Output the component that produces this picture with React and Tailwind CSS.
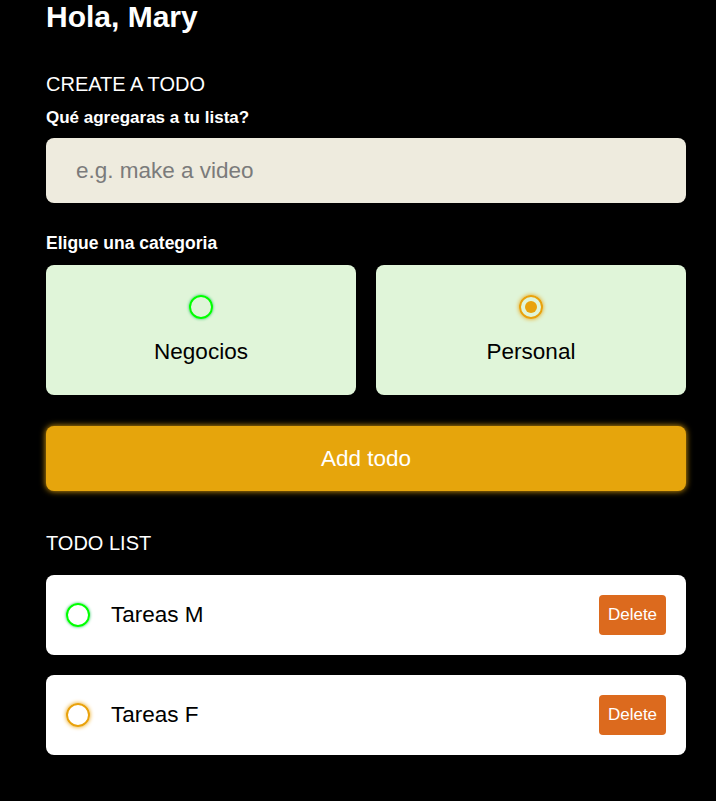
import React, { useState } from 'react';

const todos = [
  { id: 1, text: 'Tareas M', category: 'business' },
  { id: 2, text: 'Tareas F', category: 'personal' },
];

const Bubble = ({ category, checked }) => {
  const ring =
    category === 'business'
      ? 'border-[#00ff00] shadow-[0_0_3px_#22c55e]'
      : 'border-[#e9a20c] shadow-[0_0_4px_#e9a20c]';
  return (
    <span className={`w-6 h-6 rounded-full border-2 flex items-center justify-center shrink-0 ${ring}`}>
      {checked && <span className="w-3 h-3 rounded-full bg-[#e9a20c]" />}
    </span>
  );
};

const App = () => {
  const [category, setCategory] = useState('personal');

  return (
    <div className="min-h-[801px] bg-black text-white pl-[46px] pb-10" style={{ fontFamily: '"Liberation Sans", Arial, sans-serif' }}>
      <div className="w-[640px]">
        <h1 className="text-[30px] leading-[34px] font-bold">Hola, Mary</h1>

        <h2 className="mt-[39px] text-[20px] leading-[23px]">CREATE A TODO</h2>
        <h4 className="mt-[12px] text-[17px] leading-[19px] font-bold">Qué agregaras a tu lista?</h4>

        <input
          type="text"
          placeholder="e.g. make a video"
          className="mt-[11px] block w-full h-[65px] rounded-lg bg-[#eeebde] px-[30px] text-[22.5px] text-black placeholder:text-[#7b7b7b] outline-none shadow-[0_2px_6px_rgba(0,0,0,0.4)]"
        />

        <h4 className="mt-[31px] text-[17.5px] leading-[19px] font-bold">Eligue una categoria</h4>

        <div className="mt-[12px] grid grid-cols-2 gap-5">
          {[
            { key: 'business', label: 'Negocios' },
            { key: 'personal', label: 'Personal' },
          ].map((c) => (
            <button
              key={c.key}
              onClick={() => setCategory(c.key)}
              className="h-[130px] rounded-lg bg-[#e0f5d9] flex flex-col items-center justify-center gap-[20px] text-black cursor-pointer"
            >
              <Bubble category={c.key} checked={category === c.key} />
              <span className="text-[22.5px] leading-[26px]">{c.label}</span>
            </button>
          ))}
        </div>

        <button className="mt-[31px] w-full h-[65px] rounded-lg bg-[#e6a50c] text-white text-[22.5px] shadow-[0_0_6px_#e6a50c] cursor-pointer">
          Add todo
        </button>

        <h2 className="mt-[41px] text-[20px] leading-[23px]">TODO LIST</h2>

        <div className="mt-5 flex flex-col gap-5">
          {todos.map((t) => (
            <div key={t.id} className="h-20 rounded-lg bg-white flex items-center pl-5 pr-5 text-black">
              <Bubble category={t.category} checked={false} />
              <span className="ml-[21px] flex-1 text-[22.5px] leading-[26px]">{t.text}</span>
              <button className="h-10 w-[67px] rounded bg-[#dc6a1e] text-white text-[17px] cursor-pointer">
                Delete
              </button>
            </div>
          ))}
        </div>
      </div>
    </div>
  );
};

export default App;
